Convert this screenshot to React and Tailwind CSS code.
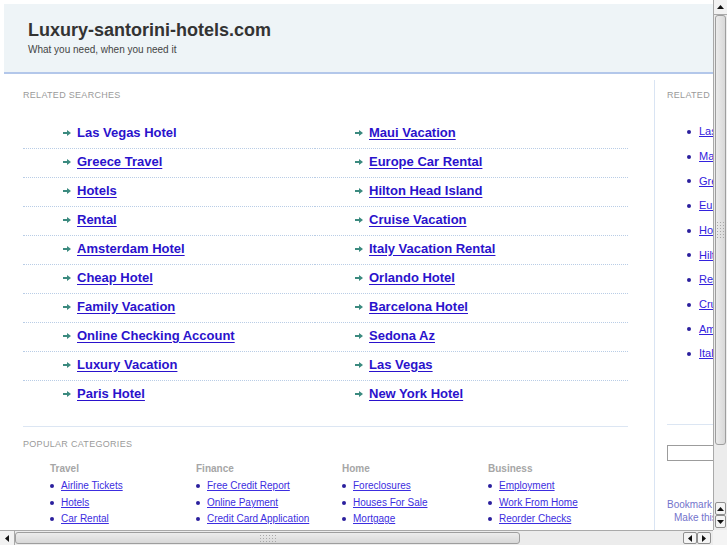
import React from "react";

const related = [
  "Las Vegas Hotel", "Maui Vacation",
  "Greece Travel", "Europe Car Rental",
  "Hotels", "Hilton Head Island",
  "Rental", "Cruise Vacation",
  "Amsterdam Hotel", "Italy Vacation Rental",
  "Cheap Hotel", "Orlando Hotel",
  "Family Vacation", "Barcelona Hotel",
  "Online Checking Account", "Sedona Az",
  "Luxury Vacation", "Las Vegas",
  "Paris Hotel", "New York Hotel",
];

const sideLinks = [
  "Las Vegas Hotel", "Maui Vacation", "Greece Travel", "Europe Car Rental", "Hotels",
  "Hilton Head Island", "Rental", "Cruise Vacation", "Amsterdam Hotel", "Italy Vacation Rental",
];

const categories = [
  { title: "Travel", items: ["Airline Tickets", "Hotels", "Car Rental"] },
  { title: "Finance", items: ["Free Credit Report", "Online Payment", "Credit Card Application"] },
  { title: "Home", items: ["Foreclosures", "Houses For Sale", "Mortgage"] },
  { title: "Business", items: ["Employment", "Work From Home", "Reorder Checks"] },
];

function Arrow() {
  return (
    <svg width="8" height="6" viewBox="0 0 8 6" className="shrink-0">
      <polygon points="0,2 4,2 4,0 8,3 4,6 4,4 0,4" fill="#3b8a7f" />
    </svg>
  );
}

function Tri({ dir }) {
  const pts = {
    up: "0,5 3.5,1 7,5",
    down: "0,1 3.5,5 7,1",
    left: "5,0 1,3.5 5,7",
    right: "1,0 5,3.5 1,7",
  }[dir];
  const vb = dir === "up" || dir === "down" ? "0 0 7 6" : "0 0 6 7";
  const w = dir === "up" || dir === "down" ? 7 : 6;
  const h = dir === "up" || dir === "down" ? 6 : 7;
  return (
    <svg width={w} height={h} viewBox={vb}>
      <polygon points={pts} fill="#111" />
    </svg>
  );
}

function Grip({ vertical }) {
  const dots = [];
  const rows = vertical ? 6 : 3;
  const cols = vertical ? 3 : 6;
  for (let i = 0; i < rows * cols; i++) dots.push(i);
  return (
    <div
      className={
        vertical
          ? "grid grid-cols-3 gap-[2px]"
          : "grid grid-cols-6 gap-[2px]"
      }
    >
      {dots.map((d) => (
        <span key={d} className="block w-[1px] h-[1px] bg-[#a8a8a8]" />
      ))}
    </div>
  );
}

function VScroll() {
  return (
    <div className="w-[14px] h-full flex flex-col border-l border-[#a9a9a9] bg-[#ececec]">
      <div className="h-[15px] flex items-center justify-center bg-[#f2f2f2] border-b border-[#a9a9a9]">
        <Tri dir="up" />
      </div>
      <div className="h-[430px] mx-[1px] rounded-[3px] border border-[#9e9e9e] bg-gradient-to-r from-[#ececec] to-[#d8d8d8] flex items-center justify-center">
        <Grip vertical />
      </div>
      <div className="flex-1" />
      <div className="h-[13px] mx-[1px] rounded-[2px] border border-[#8f8f8f] bg-[#f4f4f4] flex items-center justify-center">
        <Tri dir="up" />
      </div>
      <div className="h-[13px] mx-[1px] rounded-[2px] border border-[#8f8f8f] bg-[#f4f4f4] flex items-center justify-center">
        <Tri dir="down" />
      </div>
      <div className="h-[2px]" />
    </div>
  );
}

function HScroll() {
  return (
    <div className="w-[713px] h-full flex border-t border-[#a9a9a9] bg-[#ececec]">
      <div className="w-[15px] flex items-center justify-center bg-[#f2f2f2] border-r border-[#a9a9a9]">
        <Tri dir="left" />
      </div>
      <div className="w-[505px] my-[1px] rounded-[3px] border border-[#9e9e9e] bg-gradient-to-b from-[#ececec] to-[#d8d8d8] flex items-center justify-center">
        <Grip />
      </div>
      <div className="flex-1" />
      <div className="w-[14px] my-[1px] rounded-[2px] border border-[#8f8f8f] bg-[#f4f4f4] flex items-center justify-center">
        <Tri dir="left" />
      </div>
      <div className="w-[14px] my-[1px] rounded-[2px] border border-[#8f8f8f] bg-[#f4f4f4] flex items-center justify-center">
        <Tri dir="right" />
      </div>
      <div className="w-[2px]" />
    </div>
  );
}

function Page() {
  return (
    <div className="w-[960px] p-[4px] font-['Liberation_Sans',Arial,sans-serif]">
      {/* Header */}
      <div className="h-[70px] bg-[#eef4f7] border-b-2 border-[#b3c7ea] pl-[24px] pt-[15px]">
        <div className="text-[18px] leading-[22px] font-bold text-[#333333]">
          Luxury-santorini-hotels.com
        </div>
        <div className="mt-[3px] text-[10px] leading-[12px] text-[#444444]">
          What you need, when you need it
        </div>
      </div>

      {/* Body */}
      <div className="flex mt-[6px]">
        {/* Main */}
        <div className="w-[651px] shrink-0 border-r border-[#d9e4f3] pl-[19px] pb-[40px]">
          <div className="pt-[9px] text-[9px] leading-[12px] tracking-[0.3px] text-[#9a9a9a] uppercase">
            Related Searches
          </div>
          <ul className="mt-[19px] w-[605px] grid grid-cols-[292px_313px]">
            {related.map((t, i) => (
              <li
                key={t}
                className={
                  "h-[29px] flex items-center pb-[3px] pl-[40px] gap-[6px] " +
                  (i < 18 ? "border-b border-dotted border-[#b9cde6]" : "")
                }
              >
                <Arrow />
                <a
                  href="#"
                  className={
                    "text-[13px] leading-[16px] font-bold text-[#2a12cc] " +
                    (i === 0 ? "no-underline" : "underline underline-offset-[2px]")
                  }
                >
                  {t}
                </a>
              </li>
            ))}
          </ul>
          <div className="mt-[16px] w-[605px] h-px bg-[#dce6f3]" />
          <div className="mt-[11px] text-[9px] leading-[12px] tracking-[0.3px] text-[#9a9a9a] uppercase">
            Popular Categories
          </div>
          <div className="mt-[13px] pl-[27px] grid grid-cols-[146px_146px_146px_146px]">
            {categories.map((c) => (
              <div key={c.title}>
                <div className="text-[10px] leading-[12px] font-bold text-[#a6a6a6]">{c.title}</div>
                <ul className="mt-[3px]">
                  {c.items.map((it) => (
                    <li key={it} className="flex items-center gap-[7px] h-[16.5px]">
                      <span className="block w-[4px] h-[4px] rounded-full bg-[#2b1f9e]" />
                      <a href="#" className="text-[10px] leading-[12px] text-[#3c2de0] underline">
                        {it}
                      </a>
                    </li>
                  ))}
                </ul>
              </div>
            ))}
          </div>
        </div>

        {/* Sidebar */}
        <div className="pl-[12px] w-[260px]">
          <div className="pt-[9px] text-[9px] leading-[12px] tracking-[0.3px] text-[#9a9a9a] uppercase">
            Related Searches
          </div>
          <ul className="mt-[18.67px]">
            {sideLinks.map((t) => (
              <li key={t} className="h-[24.67px] flex items-center pl-[20px] gap-[8px]">
                <span className="block w-[4px] h-[4px] rounded-full bg-[#2b1f9e]" />
                <a href="#" className="text-[11px] leading-[13px] text-[#3322dd] underline">
                  {t}
                </a>
              </li>
            ))}
          </ul>
          <div className="mt-[58px] w-[200px] h-px bg-[#dce6f3]" />
          <div className="mt-[20px] w-[150px] h-[16px] border border-[#9c9c9c] bg-white" />
          <div className="mt-[37px] text-[10px] leading-[13px] text-[#7373cc]">
            <div>Bookmark this page</div>
            <div className="pl-[7px]">Make this your homepage</div>
          </div>
        </div>
      </div>
    </div>
  );
}

export default function App() {
  return (
    <div className="w-[727px] h-[545px] flex flex-col overflow-hidden bg-white">
      <div className="flex h-[530px]">
        <div className="w-[713px] h-full overflow-hidden">
          <Page />
        </div>
        <VScroll />
      </div>
      <div className="flex h-[15px]">
        <HScroll />
        <div className="w-[14px] h-full bg-[#f4f4f4]" />
      </div>
    </div>
  );
}
